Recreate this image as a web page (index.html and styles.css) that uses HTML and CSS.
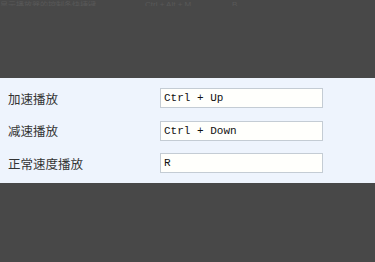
FILE: index.html
```html
<!DOCTYPE html>
<html lang="zh">
<head>
<meta charset="utf-8">
<link rel="stylesheet" href="styles.css">
</head>
<body>
<div class="ghost">
  <span class="g1">显示播放器的控制条快捷键</span>
  <span class="g2">Ctrl + Alt + M</span>
  <span class="g3">B</span>
</div>
<div class="panel">
  <div class="row">
    <span class="label">加速播放</span>
    <div class="key">Ctrl + Up</div>
  </div>
  <div class="row">
    <span class="label">减速播放</span>
    <div class="key">Ctrl + Down</div>
  </div>
  <div class="row">
    <span class="label">正常速度播放</span>
    <div class="key">R</div>
  </div>
</div>
</body>
</html>
```
FILE: styles.css
```css
html, body {
  margin: 0;
  padding: 0;
  background: #484848;
  width: 375px;
  height: 262px;
  overflow: hidden;
}
.ghost {
  height: 6px;
  overflow: hidden;
  display: flex;
  align-items: flex-end;
  font-family: "Noto Sans CJK SC", sans-serif;
  font-size: 8px;
  line-height: 10px;
  color: #585858;
  white-space: nowrap;
}
.ghost span {
  display: block;
  flex-shrink: 0;
  margin-bottom: -4px;
}
.g1 { width: 145px; }
.g2 { width: 87px; font-family: "Liberation Sans", sans-serif; }
.g3 { font-family: "Liberation Sans", sans-serif; }
.panel {
  margin-top: 72px;
  height: 105px;
  background: #eef4fd;
  box-sizing: border-box;
  padding-top: 10px;
  display: flex;
  flex-direction: column;
  gap: 12.5px;
}
.row {
  display: flex;
  align-items: center;
  height: 20px;
}
.label {
  width: 152px;
  padding-left: 8px;
  font-family: "Noto Sans CJK SC", sans-serif;
  font-size: 12.5px;
  color: #333;
}
.key {
  width: 163px;
  height: 20px;
  box-sizing: border-box;
  border: 1px solid #c4ccd4;
  background: #fffffc;
  font-family: "Liberation Mono", monospace;
  font-size: 11px;
  line-height: 18px;
  padding-left: 3px;
  color: #111;
}
```
